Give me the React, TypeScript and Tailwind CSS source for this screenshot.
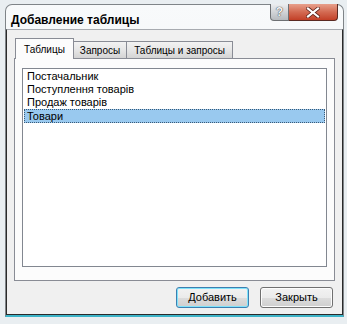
import React from "react";

const items = ["Постачальник", "Поступлення товарів", "Продаж товарів", "Товари"];

export default function App() {
  const font = { fontFamily: '"Liberation Sans", Arial, sans-serif' };
  return (
    <div className="w-[347px] h-[324px] bg-[#e9eef1] pt-[4px] pl-[5px]" style={font}>
      <div className="w-[339px] h-[313px] flex flex-col border border-[#7f8488] border-b-[#3cb4c8] border-b-2 rounded-t-[7px] bg-gradient-to-b from-[#f8fafb] to-[#e7ebee]">
        {/* Title bar */}
        <div className="h-[24px] flex items-start relative">
          <div className="pl-[5px] pt-[9px] text-[12px] font-bold text-black leading-none">
            Добавление таблицы
          </div>
          <div className="absolute right-[5px] top-[-1px] flex">
            <div className="w-[19px] h-[17px] rounded-bl-[4px] border border-[#6d7073] border-t-0 bg-gradient-to-b from-[#eceef0] to-[#b7bbbf] flex items-center justify-center text-[12px] font-bold text-[#f4f4f4] leading-none" style={{ textShadow: "0 0 1px #444, 0 0 1px #444" }}>
              ?
            </div>
            <div className="w-[49px] h-[17px] rounded-br-[4px] border border-l-0 border-[#5a2a22] border-t-0 bg-gradient-to-b from-[#e7a08c] via-[#d36a52] to-[#c23f26] flex items-center justify-center">
              <svg width="14" height="11" viewBox="0 0 14 11">
                <path d="M2 1.5 L12 9.5 M12 1.5 L2 9.5" stroke="#5a2018" strokeWidth="3.6" strokeLinecap="square" />
                <path d="M2 1.5 L12 9.5 M12 1.5 L2 9.5" stroke="#ffffff" strokeWidth="2.2" strokeLinecap="square" />
              </svg>
            </div>
          </div>
        </div>
        {/* Client area */}
        <div className="flex-1 flex flex-col bg-[#f0f0f0] border border-[#2a2a2a] border-t-[#a7abb0]">
          {/* Tabs */}
          <div className="ml-[7px] mr-[7px] mt-[8px] flex flex-col">
            <div className="flex items-end pl-[1px] h-[20px]">
              <div className="relative z-10 -mb-px h-[21px] px-[8px] border border-b-0 border-[#898c95] bg-[#fcfcfc] text-[10px] text-black flex items-center">
                Таблицы
              </div>
              <div className="h-[17px] px-[6px] border border-l-0 border-b-0 border-[#898c95] bg-gradient-to-b from-[#f2f2f2] via-[#e6e6e6] to-[#d4d4d4] text-[10px] text-black flex items-center">
                Запросы
              </div>
              <div className="h-[17px] px-[7px] border border-l-0 border-b-0 border-[#898c95] bg-gradient-to-b from-[#f2f2f2] via-[#e6e6e6] to-[#d4d4d4] text-[10px] text-black flex items-center">
                Таблицы и запросы
              </div>
            </div>
            <div className="h-[223px] border border-[#898c95] bg-[#fcfcfc] pt-[9px] px-[7px] pb-[13px] flex">
              <div className="flex-1 border border-[#828790] bg-white p-px flex flex-col">
                {items.map((it, i) =>
                  i === 3 ? (
                    <div key={it} className="h-[14px] pl-[2px] text-[11px] leading-[13px] text-black bg-[#99c9ef] border border-dotted border-[#3a5a78]">
                      {it}
                    </div>
                  ) : (
                    <div key={it} className="h-[13px] pl-[3px] text-[11px] leading-[13px] text-black">
                      {it}
                    </div>
                  )
                )}
              </div>
            </div>
          </div>
          {/* Buttons */}
          <div className="mt-[6px] flex justify-end gap-[11px] pr-[9px]">
            <button className="w-[73px] h-[21px] rounded-[3px] border border-[#3c7fb1] bg-[linear-gradient(to_bottom,#f2f2f2_0%,#ebebeb_50%,#dddddd_50%,#cfcfcf_100%)] text-[11px] text-black shadow-[inset_0_0_0_1px_#7fe3fb]">
              Добавить
            </button>
            <button className="w-[73px] h-[21px] rounded-[3px] border border-[#707070] bg-[linear-gradient(to_bottom,#f2f2f2_0%,#ebebeb_50%,#dddddd_50%,#cfcfcf_100%)] text-[11px] text-black shadow-[inset_0_0_0_1px_#fcfcfc]">
              Закрыть
            </button>
          </div>
        </div>
      </div>
    </div>
  );
}
